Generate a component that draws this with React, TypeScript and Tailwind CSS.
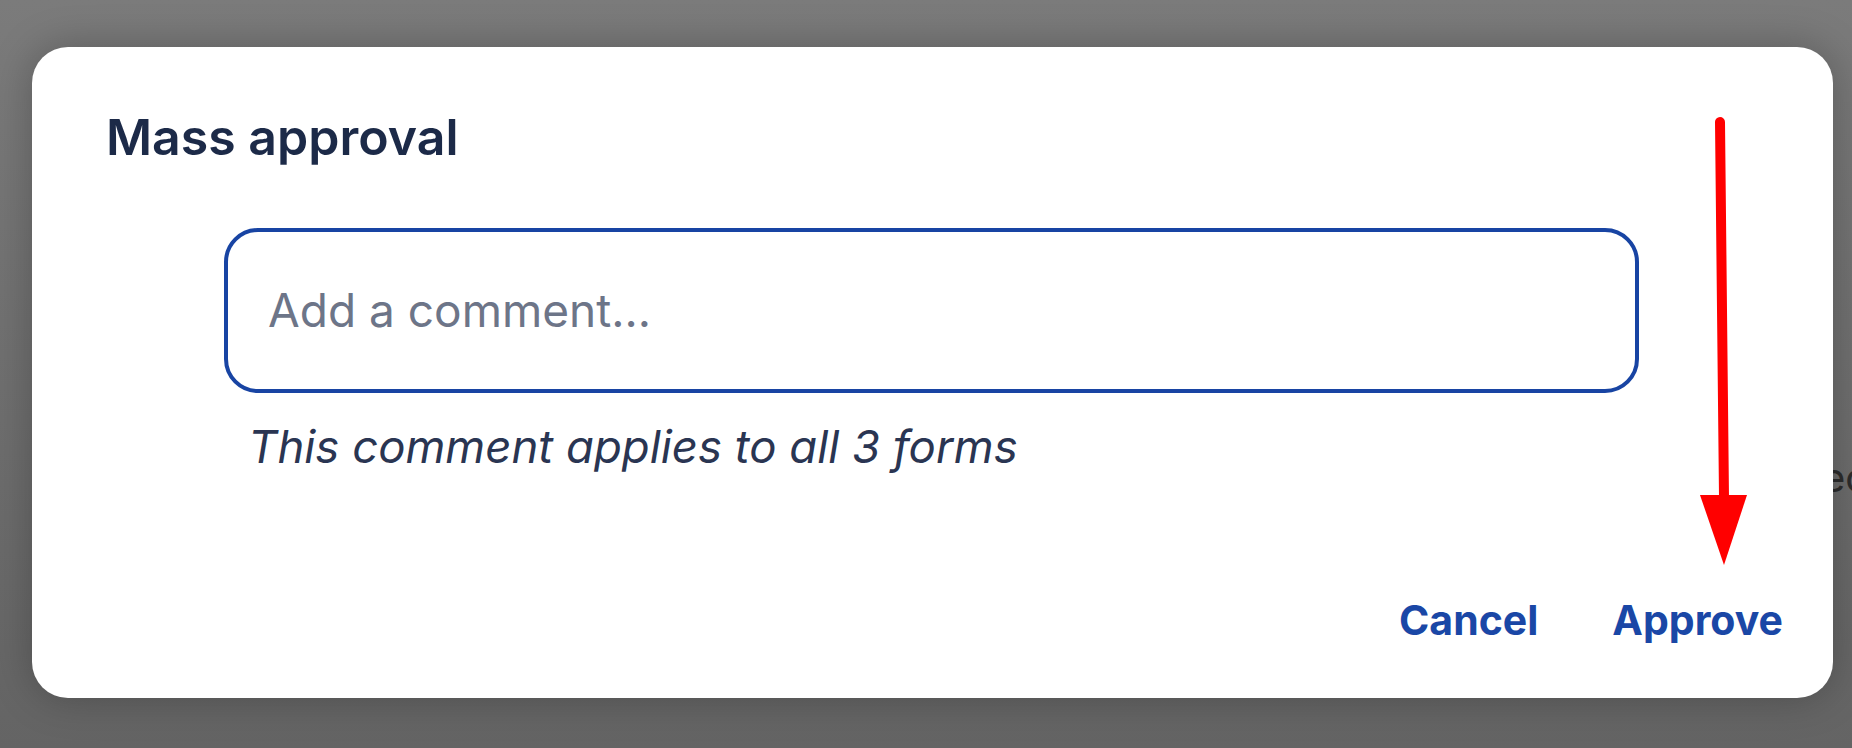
export default function App() {
  return (
    <div
      className="relative w-[1852px] h-[748px] overflow-hidden bg-linear-to-b from-[#7b7b7b] to-[#646464]"
      style={{ fontFamily: "Inter, 'Noto Sans', sans-serif" }}
    >
      {/* page behind the scrim */}
      <span className="absolute left-[1822px] top-[448px] text-[40px] text-[#2c2c2c]">ec</span>

      <div className="relative pt-[47px] pl-[32px]">
        <div className="relative w-[1801px] h-[651px] rounded-[36px] bg-white shadow-[0_0_40px_rgba(0,0,0,0.25)] flex flex-col pt-[60px] pl-[74px] pr-[50px]">
          <h2 className="text-[50px] leading-[60px] font-semibold text-[#1c2a48]">Mass approval</h2>

          <div className="ml-[118px] mt-[61px] w-[1415px]">
            <div className="h-[165px] rounded-[34px] border-[4px] border-[#1844a3] flex items-center px-[40px]">
              <input
                className="w-full bg-transparent outline-none text-[46px] text-[#1c2a48] placeholder:text-[#6d7588]"
                placeholder="Add a comment..."
              />
            </div>
            <p className="ml-[24px] mt-[26px] text-[45.5px] leading-[55px] italic text-[#2a3552]">
              This comment applies to all 3 forms
            </p>
          </div>

          <div className="mt-auto mb-[53px] flex justify-end gap-[74px] text-[41px] leading-[49px] font-bold text-[#1a47a6]">
            <button>Cancel</button>
            <button>Approve</button>
          </div>

          {/* annotation arrow */}
          <svg className="absolute left-[1660px] top-[70px]" width="80" height="460" viewBox="0 0 80 460">
            <path d="M28 5 L32 380" stroke="#ff0000" strokeWidth="10" strokeLinecap="round" fill="none" />
            <polygon points="8,378 55,378 32,448" fill="#ff0000" />
          </svg>
        </div>
      </div>
    </div>
  )
}
